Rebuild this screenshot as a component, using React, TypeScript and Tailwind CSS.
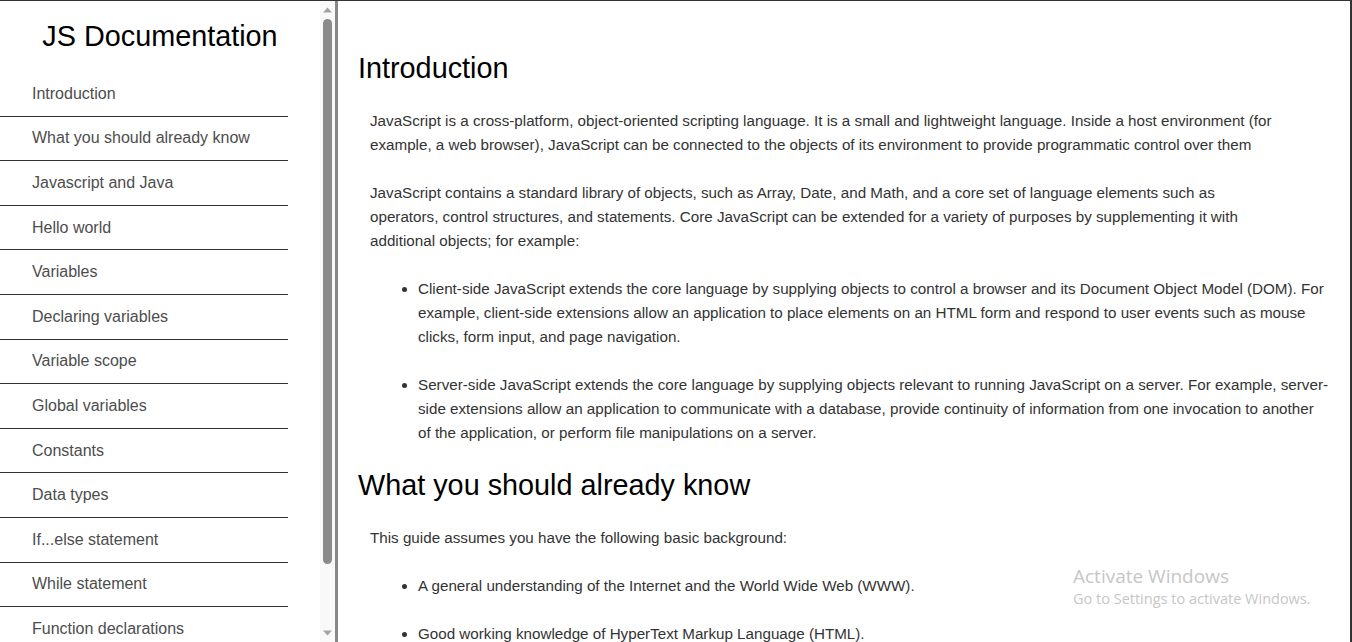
const NAV = [
  'Introduction',
  'What you should already know',
  'Javascript and Java',
  'Hello world',
  'Variables',
  'Declaring variables',
  'Variable scope',
  'Global variables',
  'Constants',
  'Data types',
  'If...else statement',
  'While statement',
  'Function declarations',
]

export default function App() {
  return (
    <div className="relative flex h-[642px] overflow-hidden border-t border-r-2 border-[#333] bg-white font-['Liberation_Sans',Arial,sans-serif]">
      {/* Sidebar */}
      <div className="flex h-full w-[338px] shrink-0 border-r-[3px] border-[#888]">
        <nav className="h-full w-[320px] overflow-hidden">
          <header className="flex h-[71px] items-center justify-center">
            <h1 className="text-[28.8px] leading-[33px] text-black">JS Documentation</h1>
          </header>
          <ul>
            {NAV.map(item => (
              <li key={item}>
                <a href="#" className="flex h-[44.6px] w-[288px] items-center border-b border-[#333] pl-8 text-[16px] text-[#4d4d4d]">
                  {item}
                </a>
              </li>
            ))}
          </ul>
        </nav>
        {/* scrollbar */}
        <div className="flex h-full w-[15px] flex-col items-center bg-[#f9f9f9]">
          <svg width="9" height="6" viewBox="0 0 9 6" className="mt-[6px]">
            <path d="M0 5.5 L4.5 0.5 L9 5.5 Z" fill="#a3a3a3" />
          </svg>
          <div className="mt-[6px] h-[545px] w-[9px] rounded-full bg-[#8a8a8a]" />
          <div className="flex-1" />
          <svg width="9" height="6" viewBox="0 0 9 6" className="mb-[6px]">
            <path d="M0 0.5 L4.5 5.5 L9 0.5 Z" fill="#a3a3a3" />
          </svg>
        </div>
      </div>

      {/* Main */}
      <main className="flex-1 overflow-hidden pt-[51px] pl-5 pr-5 text-[15.2px] leading-[24px] text-[#333]">
        <section className="flex flex-col gap-6">
          <h2 className="text-[28.8px] leading-[33px] text-black">Introduction</h2>
          <p className="pl-3 pr-[50px]">
            JavaScript is a cross-platform, object-oriented scripting language. It is a small and lightweight language. Inside a host environment (for example, a web browser), JavaScript can be connected to the objects of its environment to provide programmatic control over them
          </p>
          <p className="pl-3 pr-[50px]">
            JavaScript contains a standard library of objects, such as Array, Date, and Math, and a core set of language elements such as operators, control structures, and statements. Core JavaScript can be extended for a variety of purposes by supplementing it with additional objects; for example:
          </p>
          <ul className="flex list-disc flex-col gap-6 pl-[60px]">
            <li>
              Client-side JavaScript extends the core language by supplying objects to control a browser and its Document Object Model (DOM). For example, client-side extensions allow an application to place elements on an HTML form and respond to user events such as mouse clicks, form input, and page navigation.
            </li>
            <li>
              Server-side JavaScript extends the core language by supplying objects relevant to running JavaScript on a server. For example, server-side extensions allow an application to communicate with a database, provide continuity of information from one invocation to another of the application, or perform file manipulations on a server.
            </li>
          </ul>
        </section>
        <section className="mt-6 flex flex-col gap-6">
          <h2 className="text-[28.8px] leading-[33px] text-black">What you should already know</h2>
          <p className="pl-3 pr-[50px]">This guide assumes you have the following basic background:</p>
          <ul className="flex list-disc flex-col gap-6 pl-[60px]">
            <li>A general understanding of the Internet and the World Wide Web (WWW).</li>
            <li>Good working knowledge of HyperText Markup Language (HTML).</li>
          </ul>
        </section>
      </main>

      {/* Windows watermark */}
      <div className="pointer-events-none absolute top-[563px] left-[1073px] font-['Open_Sans','Noto_Sans',sans-serif] text-[#c6c6c6]">
        <p className="text-[19px] leading-[24px]">Activate Windows</p>
        <p className="text-[14.5px] leading-[22px]">Go to Settings to activate Windows.</p>
      </div>
    </div>
  )
}
